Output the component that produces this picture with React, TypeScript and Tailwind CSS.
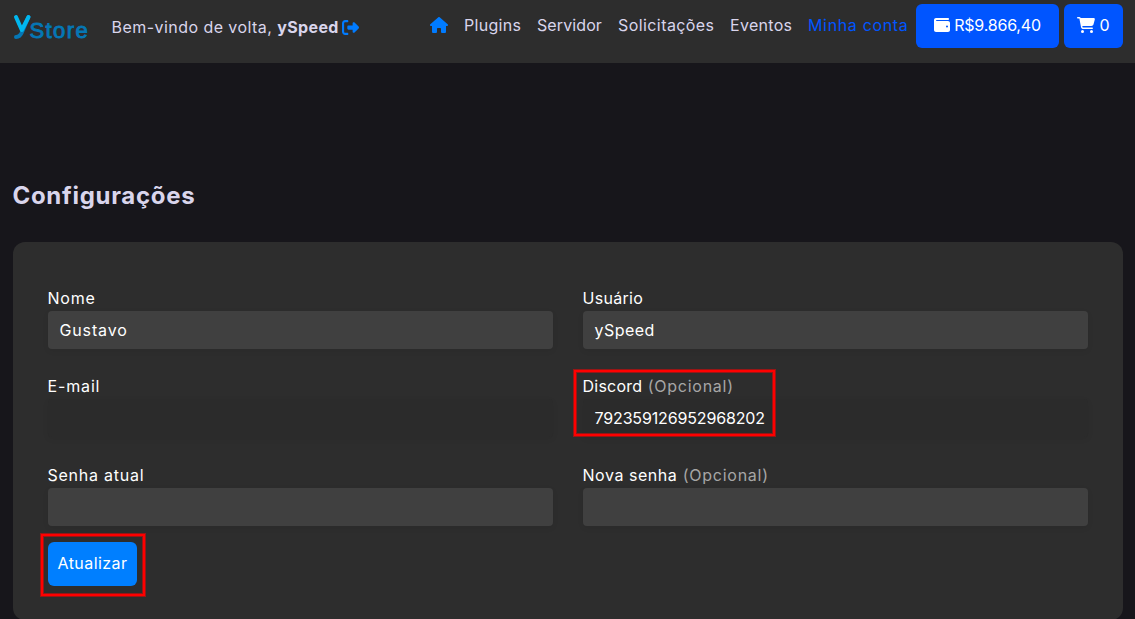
import { FaHouse, FaRightFromBracket, FaWallet, FaCartShopping } from "react-icons/fa6";

type FieldProps = {
  label: string;
  labelClass: string;
  optional?: boolean;
  value?: string;
  valueClass?: string;
  muted?: boolean;
};

function Field({ label, labelClass, optional, value, valueClass = "", muted }: FieldProps) {
  return (
    <label className="flex flex-col text-white">
      <span className="-ml-px h-[25px] pl-[0.5px] leading-6">
        <span className={labelClass}>{label}</span>
        {optional && <span className="tracking-[0.75px] text-[#a6a6a6]"> (Opcional)</span>}
      </span>
      <span className={`flex h-[38px] items-center rounded px-[11.5px] shadow-[0_2px_6px_rgba(0,0,0,0.06)] ${muted ? "bg-[#2b2b2b]" : "bg-[#404040]"} ${valueClass}`}>
        {value}
      </span>
    </label>
  );
}

export default function App() {
  return (
    <div className="h-[619px] w-[1135px] overflow-hidden bg-[#17161b] font-['Inter',sans-serif] text-base text-[#d9d5ec]">
      <header className="flex h-[63px] bg-[#2d2d2d]">
        <svg className="ml-[13px] mt-[13px] h-[30px] w-[76px]" viewBox="0 0 76 30">
          <path d="M15.5 4L9 19Q7 24 3 24" fill="none" stroke="#0577b5" strokeWidth="4" strokeLinecap="round" />
          <path d="M3 4L8.8 17L15.5 4" fill="none" stroke="#00b7ef" strokeWidth="4" strokeLinecap="round" strokeLinejoin="round" />
          <text x="16.5" y="25" fontFamily="Liberation Sans" fontSize="22" letterSpacing="1.4" stroke="#0577b5" strokeWidth="0.9" fill="#0577b5">Store</text>
        </svg>
        <div className="ml-[22px] mt-[15px] flex h-6 w-[319px] items-center whitespace-nowrap">
          <span className="pl-[0.5px]"><span className="tracking-[0.45px]">Bem-vindo de volta, </span><b className="tracking-[0.35px]">ySpeed</b></span>
          <FaRightFromBracket className="ml-[3px] text-[17px] text-[#007bff]" />
        </div>
        <nav className="mt-[13px] flex h-6 items-center whitespace-nowrap">
          <FaHouse className="mr-4 text-[18px] text-[#007bff]" />
          <span className="w-[73px] tracking-[0.3px]">Plugins</span>
          <span className="w-[81px] tracking-[0.1px]">Servidor</span>
          <span className="w-[112px] tracking-[0.42px]">Solicitações</span>
          <span className="w-[78px] tracking-[0.3px]">Eventos</span>
          <span className="w-[108px] tracking-[0.65px] text-[#0055ff]">Minha conta</span>
        </nav>
        <div className="mt-1 flex h-11 gap-[5px] text-white">
          <button className="flex w-[143px] items-center justify-center gap-1 rounded-md bg-[#0055ff] pb-0.5 tracking-[-0.2px]"><FaWallet />R$9.866,40</button>
          <button className="flex w-[59px] items-center justify-center gap-1 rounded-md bg-[#0055ff] pb-0.5"><FaCartShopping className="h-4 w-[18px]" />0</button>
        </div>
      </header>
      <main className="px-3 pt-[115px]">
        <h1 className="h-16 pl-[0.5px] text-2xl leading-9 font-bold tracking-[0.7px]">Configurações</h1>
        <section className="ml-px h-[378px] w-[1110px] rounded-xl bg-[#2d2d2d] px-[35px] pt-11">
          <div className="grid grid-cols-[505px_505px] grid-rows-[63px_64px_63px] gap-x-[30px] gap-y-[25px]">
            <Field label="Nome" labelClass="tracking-[0.8px]" value="Gustavo" valueClass="tracking-[0.85px]" />
            <Field label="Usuário" labelClass="tracking-[0.3px]" value="ySpeed" valueClass="tracking-[0.45px]" />
            <Field label="E-mail" labelClass="tracking-[0.85px]" muted />
            <Field label="Discord" labelClass="tracking-[0.25px]" optional muted value="792359126952968202" valueClass="tracking-[-0.15px]" />
            <Field label="Senha atual" labelClass="tracking-[0.75px]" />
            <Field label="Nova senha" labelClass="tracking-[0.55px]" optional />
          </div>
          <button className="mt-4 h-11 w-[89px] rounded-md bg-[#007fff] pb-0.5 tracking-[0.45px] text-white">Atualizar</button>
        </section>
      </main>
      <div className="absolute left-[574px] top-[370px] h-[66px] w-[201px] border-2 border-[#f00] shadow-[0_0_0_1px_rgba(255,0,0,0.5),inset_0_0_0_1px_rgba(255,0,0,0.5)]" />
      <div className="absolute left-[41px] top-[534px] h-[62px] w-[104px] border-2 border-[#f00] shadow-[0_0_0_1px_rgba(255,0,0,0.5),inset_0_0_0_1px_rgba(255,0,0,0.5)]" />
    </div>
  );
}
